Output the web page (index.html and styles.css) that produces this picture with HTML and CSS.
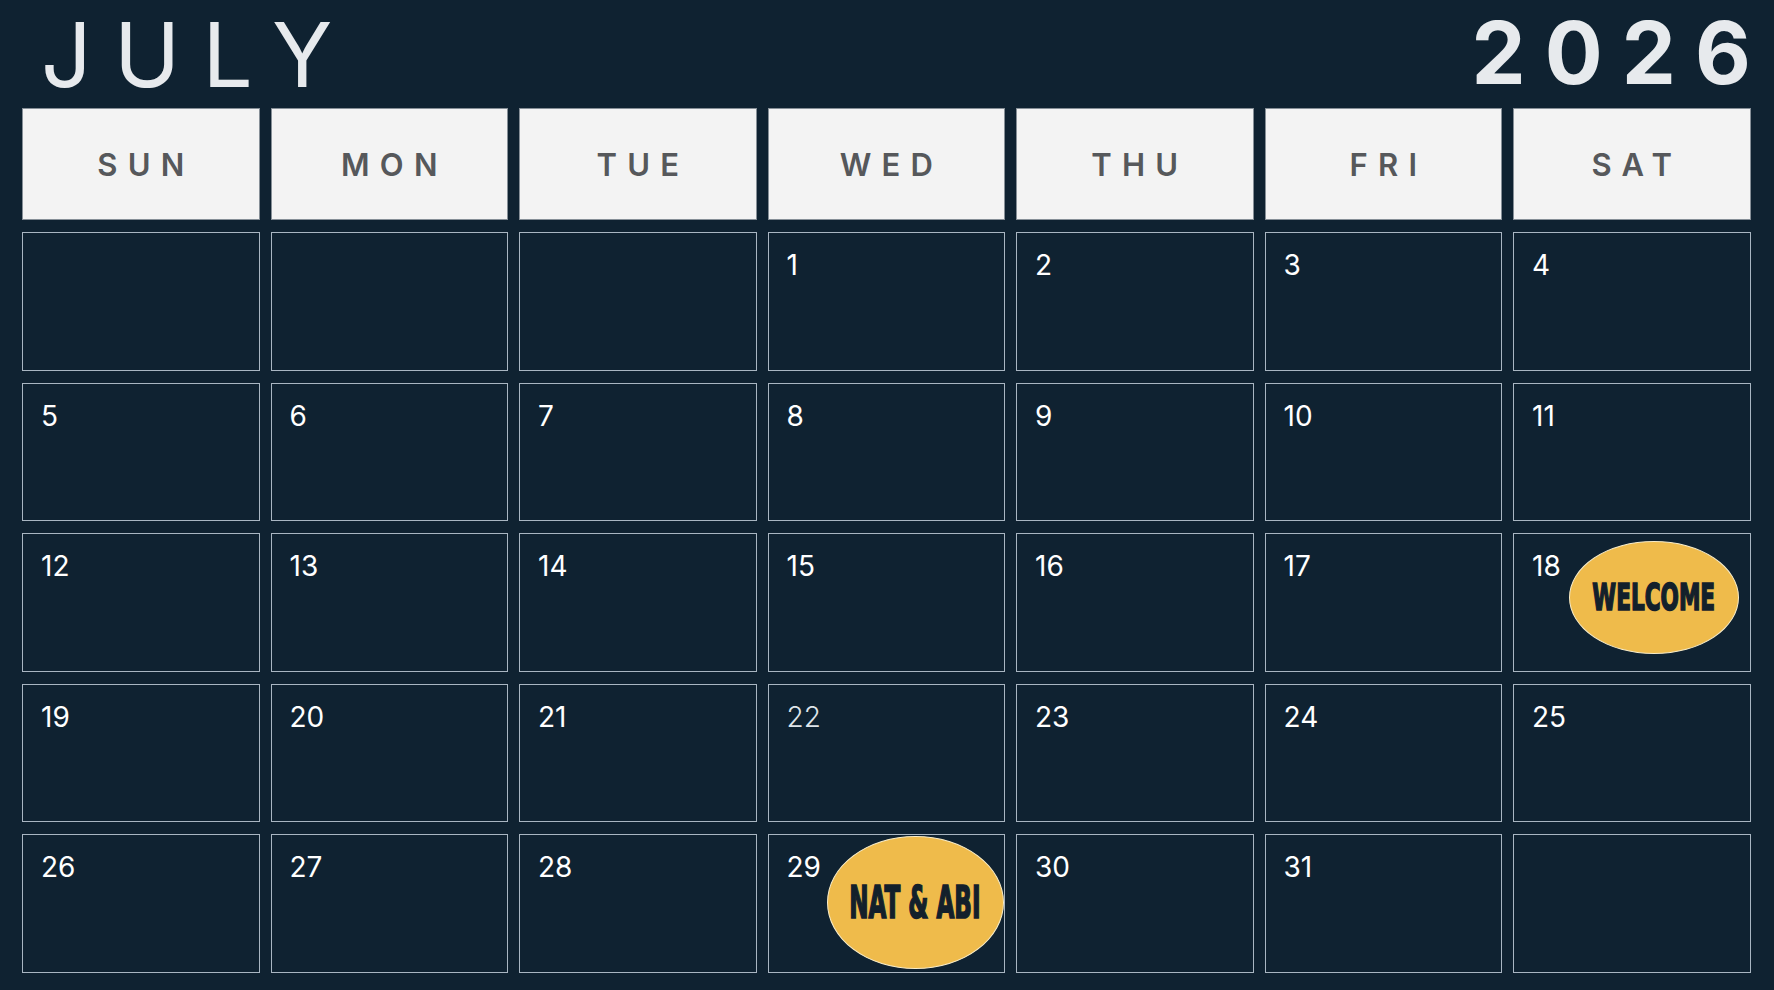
FILE: index.html
```html
<!DOCTYPE html>
<html lang="en">
<head>
<meta charset="utf-8">
<title>July 2026</title>
<link rel="stylesheet" href="styles.css">
</head>
<body>
<div class="page">
  <header class="title-bar">
    <h1 class="month">JULY</h1>
    <div class="year">2026</div>
  </header>
  <div class="calendar">
    <div class="dow"><span>SUN</span></div>
    <div class="dow"><span>MON</span></div>
    <div class="dow"><span>TUE</span></div>
    <div class="dow"><span>WED</span></div>
    <div class="dow"><span>THU</span></div>
    <div class="dow"><span>FRI</span></div>
    <div class="dow"><span>SAT</span></div>

    <div class="day"></div>
    <div class="day"></div>
    <div class="day"></div>
    <div class="day"><span class="num">1</span></div>
    <div class="day"><span class="num">2</span></div>
    <div class="day"><span class="num">3</span></div>
    <div class="day"><span class="num">4</span></div>

    <div class="day"><span class="num">5</span></div>
    <div class="day"><span class="num">6</span></div>
    <div class="day"><span class="num">7</span></div>
    <div class="day"><span class="num">8</span></div>
    <div class="day"><span class="num">9</span></div>
    <div class="day"><span class="num">10</span></div>
    <div class="day"><span class="num">11</span></div>

    <div class="day"><span class="num">12</span></div>
    <div class="day"><span class="num">13</span></div>
    <div class="day"><span class="num">14</span></div>
    <div class="day"><span class="num">15</span></div>
    <div class="day"><span class="num">16</span></div>
    <div class="day"><span class="num">17</span></div>
    <div class="day"><span class="num">18</span>
      <div class="badge badge-welcome"><span class="badge-text">WELCOME</span></div>
    </div>

    <div class="day"><span class="num">19</span></div>
    <div class="day"><span class="num">20</span></div>
    <div class="day"><span class="num">21</span></div>
    <div class="day"><span class="num dim">22</span></div>
    <div class="day"><span class="num">23</span></div>
    <div class="day"><span class="num">24</span></div>
    <div class="day"><span class="num">25</span></div>

    <div class="day"><span class="num">26</span></div>
    <div class="day"><span class="num">27</span></div>
    <div class="day"><span class="num">28</span></div>
    <div class="day"><span class="num">29</span>
      <div class="badge badge-nat"><span class="badge-text">NAT &amp; ABI</span></div>
    </div>
    <div class="day"><span class="num">30</span></div>
    <div class="day"><span class="num">31</span></div>
    <div class="day"></div>
  </div>
</div>
</body>
</html>
```

FILE: styles.css
```css
html, body {
  margin: 0;
  padding: 0;
  background: #0f2231;
}

.page {
  width: 1774px;
  height: 990px;
  box-sizing: border-box;
  padding: 0 23px 0 22px;
  font-family: Inter, "Noto Sans", sans-serif;
  color: #ffffff;
}

.title-bar {
  height: 108px;
  box-sizing: border-box;
  padding-top: 10px;
  display: flex;
  justify-content: space-between;
  align-items: flex-start;
}

.month {
  margin: 0 0 0 19px;
  font-size: 89px;
  font-weight: 400;
  line-height: 1;
  letter-spacing: 0.25em;
  color: #e7eaed;
}

.year {
  font-size: 86px;
  font-weight: 700;
  line-height: 1;
  letter-spacing: 0.222em;
  margin-right: -19px;
  color: #e7eaed;
}

.calendar {
  display: grid;
  grid-template-columns: repeat(7, 237.5px);
  grid-template-rows: 112px repeat(5, 138.5px);
  column-gap: 11px;
  row-gap: 12px;
}

.dow {
  background: #f3f3f3;
  border: 1px solid #868f97;
  display: flex;
  align-items: center;
  justify-content: center;
}

.dow span {
  font-size: 31px;
  font-weight: 600;
  letter-spacing: 0.33em;
  padding-left: 0.33em;
  color: #56585b;
  line-height: 1;
}

.day {
  position: relative;
  border: 1px solid #a9b6c2;
  box-sizing: border-box;
  padding: 18px 0 0 18px;
}

.num {
  display: block;
  font-size: 28px;
  font-weight: 400;
  line-height: 1;
  color: #ffffff;
}

.num.dim {
  color: #dfe5ea;
  font-weight: 300;
}

.badge {
  position: absolute;
  box-sizing: border-box;
  background: #efbb4b;
  border: 1.5px solid #f8ecc8;
  border-radius: 50%;
  display: flex;
  align-items: center;
  justify-content: center;
}

.badge-welcome {
  left: 55px;
  top: 7px;
  width: 170px;
  height: 113px;
}

.badge-nat {
  left: 58px;
  top: 1px;
  width: 177px;
  height: 133px;
}

.badge-text {
  display: inline-block;
  font-family: "DejaVu Sans Condensed", "DejaVu Sans", sans-serif;
  font-weight: 700;
  font-size: 30px;
  line-height: 1;
  color: #13202b;
  -webkit-text-stroke: 1.3px #13202b;
  white-space: nowrap;
  transform: scale(0.8, 1.23);
}

.badge-nat .badge-text {
  font-size: 34px;
  transform: scale(0.755, 1.28);
}
```
